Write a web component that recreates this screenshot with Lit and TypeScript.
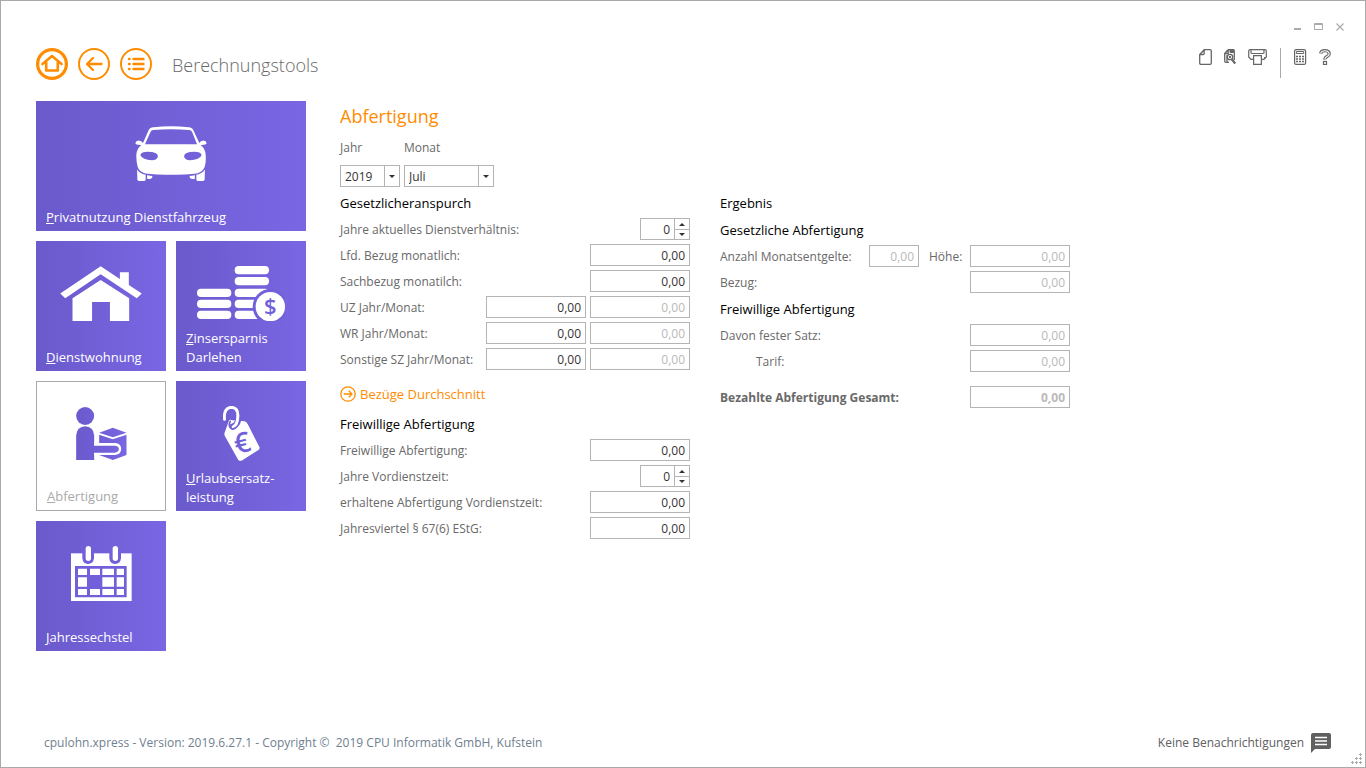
import { LitElement, html, svg, css, nothing } from "lit";
import { customElement, state } from "lit/decorators.js";
import { classMap } from "lit/directives/class-map.js";

const carIcon = html`<svg width="72" height="55" viewBox="315 92 217 166" fill="currentColor" aria-hidden="true">
  <path fill-rule="evenodd" d="M339 143 L356 105 Q359 97 370 96 Q424 89 477 96 Q488 97 491 105 L509 143 Q512 137 522 136 Q531 138 531 144 Q529 150 513 149 Q527 160 528 178 Q530 200 525 216 Q519 230 506 234 Q488 239 424 239 Q360 239 342 234 Q328 230 323 216 Q318 200 319 178 Q320 160 334 149 Q318 150 316 144 Q316 138 325 136 Q335 137 339 143 Z M345 147 H502 L487 109 Q485 105 478 104 Q424 99 370 104 Q364 105 362 109 Z M331 180 Q334 170 353 170 Q384 170 384 184 Q382 195 366 195 Q338 193 331 180 Z M516 180 Q513 170 494 170 Q463 170 463 184 Q465 195 481 195 Q509 193 516 180 Z"/>
  <path d="M321 223 Q328 235 347 239 L347 254 Q346 258 342 258 H328 Q323 258 322 254 Z M526 223 Q519 235 500 239 L500 254 Q501 258 505 258 H519 Q524 258 525 254 Z M351 241 L367 243 V248 L361 252 H352 Z M496 241 L480 243 V248 L486 252 H495 Z"/>
</svg>`;

const houseIcon = html`<svg width="82" height="55" viewBox="90 92 246 166" fill="currentColor" aria-hidden="true">
  <path d="M90 175 L212 93 L270 131 V111 H297 V149 L336 175 L321 189 L212 117 L105 189 Z"/>
  <path d="M127 189 L212 134 L298 189 V258 H240 V201 H186 V258 H127 Z"/>
</svg>`;

const coin = (x: number, y: number) => svg`<rect x=${x} y=${y} width="103" height="25" rx="12"/>`;
const coinsIcon = html`<svg width="88" height="55" viewBox="504 93 264 165" fill="currentColor" aria-hidden="true">
  ${[161, 194, 227].map((y) => coin(504, y))}
  ${[93, 126, 161, 194, 227].map((y) => coin(617, y))}
  <circle cx="724" cy="215" r="53" fill="#7260da"/>
  <circle cx="724" cy="215" r="44"/>
  <text x="724" y="238" text-anchor="middle" font-family="Open Sans" font-weight="600" font-size="66" fill="#7260da">$</text>
</svg>`;

const personIcon = html`<svg width="51" height="55" viewBox="138 93 152 165" aria-hidden="true">
  <defs><linearGradient id="pg" gradientUnits="userSpaceOnUse" x1="138" x2="290" y1="0" y2="0">
    <stop offset="0" stop-color="#6a5acd"/><stop offset="1" stop-color="#7966e2"/></linearGradient></defs>
  <g fill="url(#pg)">
    <circle cx="165" cy="123" r="27"/>
    <path d="M138 255 V181 Q140 155 165 154 Q190 155 192 181 V255 Z"/>
    <path d="M207 173 L248 158 L289 173 L248 187 Z"/>
    <path d="M207 179 L248 193 L289 179 V240 L248 255 L207 240 Z"/>
  </g>
  <path d="M192 204 H255 Q273 206 273 222 Q273 238 255 240 H192 Z" fill="#fff"/>
  <path d="M190 212 H253 Q266 213 266 222 Q266 232 253 233 H190 Z" fill="url(#pg)"/>
</svg>`;

const tagIcon = html`<svg width="37" height="55" viewBox="579 93 110 165" fill="currentColor" aria-hidden="true">
  <path d="M597 135 Q602 133 606 136 L644 139 Q650 142 653 148 L688 217 Q689 222 685 225 L634 257 Q628 259 624 254 L584 183 Q582 179 583 174 Z"/>
  <g fill="none" stroke-linecap="round">
    <path d="M607 155 Q628 148 624 120" stroke="#7260da" stroke-width="18"/>
    <path d="M583 133 Q580 98 604 97 Q624 99 623 122 Q623 148 609 156" stroke="#fff" stroke-width="9"/>
    <path d="M600 139 Q592 157 607 162 Q613 162 617 158" stroke="#7260da" stroke-width="5"/>
  </g>
  <text x="636" y="233" transform="rotate(-14 636 205)" text-anchor="middle" font-family="Open Sans" font-weight="600" font-size="84" fill="#7260da">€</text>
</svg>`;

const calendarIcon = html`<svg width="61" height="55" viewBox="123 93 183 165" fill="currentColor" aria-hidden="true">
  <rect x="123" y="115" width="182" height="143"/>
  <path d="M135 153 H290 V247 H135 Z M157 108 H192 V130 Q190 147 174 147 Q159 147 157 130 Z M238 108 H273 V130 Q271 147 255 147 Q240 147 238 130 Z" fill="#7260da"/>
  <rect x="167" y="93" width="16" height="45" rx="8"/><rect x="248" y="93" width="16" height="45" rx="8"/>
  <path d="M144 161h27v19h-27z M180 161h30v19h-30z M217 161h35v19h-35z M260 161h22v19h-22z M144 187h27v28h-27z M217 187h35v28h-35z M260 187h22v28h-22z M144 222h27v18h-27z M180 222h30v18h-30z M217 222h35v18h-35z M260 222h22v18h-22z"/>
</svg>`;

interface Tile { key: string; rest: string; second?: string; icon: unknown; wide?: boolean; }

const tiles: Tile[] = [
  { key: "P", rest: "rivatnutzung Dienstfahrzeug", icon: carIcon, wide: true },
  { key: "D", rest: "ienstwohnung", icon: houseIcon },
  { key: "Z", rest: "insersparnis", second: "Darlehen", icon: coinsIcon },
  { key: "A", rest: "bfertigung", icon: personIcon },
  { key: "U", rest: "rlaubsersatz-", second: "leistung", icon: tagIcon },
  { key: "J", rest: "ahressechstel", icon: calendarIcon },
];

@customElement("app-root")
class AppRoot extends LitElement {
  static styles = css`
    * { box-sizing: border-box; }
    button { font: inherit; color: inherit; background: none; border: 0; padding: 0; margin: 0; cursor: pointer; }
    svg { display: block; flex: none; }
    :host {
      display: flex; flex-direction: column; box-sizing: border-box; min-height: 100vh;
      border: 1px solid #aaa; background: #fff; color: #696969;
      font: 12px/18px "Segoe UI", "Open Sans", "Noto Sans", sans-serif;
    }
    .titlebar { display: flex; justify-content: flex-end; gap: 12px; padding: 21px 21px 0 0; color: #aaa; }
    header { display: flex; align-items: flex-start; gap: 10px; padding: 16px 34px 0 35px; }
    nav { display: flex; gap: 10px; color: #ff8c00; }
    .title { flex: 1; margin: 0 0 0 10px; font-size: 18px; line-height: 34px; font-weight: 300; color: #696969; }
    .tools { display: flex; gap: 12px; }
    .tools button { height: 18px; display: flex; align-items: center; }
    .rule { width: 1px; height: 30px; margin: 0 1px; background: #aaa; }
    main { flex: 1; display: grid; grid-template-columns: 270px minmax(0, 1fr); gap: 34px; align-items: start; padding: 19px 35px; }
    .tiles { display: grid; grid-template-columns: 1fr 1fr; gap: 10px; }
    .tile {
      display: flex; flex-direction: column; align-items: center; justify-content: space-between; height: 130px;
      padding: 25px 10px 4px; color: #fff; background: linear-gradient(90deg, #6a5acb, #7966e3);
      font-size: 13px; line-height: 19px; text-align: left;
    }
    .tile.wide { grid-column: span 2; }
    .tile.selected { background: #fff; border: 1px solid #aaa; color: #aaa; padding: 24px 10px 4px; }
    .caption { align-self: stretch; white-space: nowrap; }
    h2, h3 { margin: 0; font-weight: 400; }
    h2 { font-size: 18px; line-height: 30px; color: #ff8c00; }
    h3 { font-size: 13px; line-height: 20px; color: #000; margin-bottom: 5px; }
    .period { display: grid; grid-template-columns: 60px 90px; gap: 8px 4px; margin: 8px 0 6px; }
    .drop { display: grid; grid-template-columns: 1fr 15px; height: 22px; border: 1px solid #b4b4b4; }
    .drop select { grid-area: 1 / 1 / 2 / 3; appearance: none; border: 0; outline: 0; background: none; padding: 2px 4px 0; font: inherit; color: #333; }
    .arrow { grid-area: 1 / 2; display: grid; place-items: center; border-left: 1px solid #b4b4b4; pointer-events: none; }
    .columns { display: grid; grid-template-columns: repeat(2, minmax(0, 350px)); gap: 30px; }
    .rows { display: grid; gap: 4px; }
    .row { display: flex; align-items: center; gap: 4px; }
    .row label { flex: 1; padding-top: 2px; white-space: nowrap; }
    .row .middle { flex: none; width: 37px; margin-left: 6px; }
    .row .indent { padding-left: 36px; }
    .row input { width: 100px; height: 22px; border: 1px solid #b4b4b4; outline: 0; padding: 0 4px; background: #fff; font: inherit; color: #333; text-align: right; }
    .row input:disabled { color: #b9b9b9; }
    .row input.small { width: 50px; }
    .spinner { display: grid; grid-template-columns: minmax(0, 1fr) 15px; width: 50px; height: 22px; border: 1px solid #b4b4b4; }
    .row .spinner input { width: 100%; height: 20px; border: 0; }
    .steps { display: grid; grid-template-rows: 1fr 1fr; border-left: 1px solid #b4b4b4; }
    .steps button { display: grid; place-items: center; min-height: 0; }
    .steps button + button { border-top: 1px solid #b4b4b4; }
    .total { margin-top: 14px; font-weight: 700; }
    .link { display: flex; align-items: center; gap: 4px; margin: 14px 0 10px; color: #ff8c00; font-size: 13px; line-height: 20px; }
    .result { margin-bottom: 7px; }
    .later { margin-top: 6px; }
    footer { display: flex; justify-content: space-between; align-items: center; padding: 0 34px 14px 43px; color: #708090; }
    .copyright { white-space: pre; }
    .notice { display: flex; align-items: center; gap: 7px; color: #606060; }
    .grip { position: absolute; right: 4px; bottom: 4px; }
  `;

  @state() private active = "A";
  @state() private years: Record<string, number> = { service: 0, previous: 0 };

  private field(id: string, label: string, opts: { disabled?: boolean; monthly?: boolean; indent?: boolean; bold?: boolean } = {}) {
    return html`<div class=${classMap({ row: true, total: !!opts.bold })}>
      <label for=${id} class=${opts.indent ? "indent" : ""}>${label}</label>
      <input id=${id} type="text" value="0,00" ?disabled=${!!opts.disabled}>
      ${opts.monthly ? html`<input type="text" value="0,00" disabled aria-label="${label} Monat">` : nothing}
    </div>`;
  }

  private step(id: string, by: number) {
    this.years = { ...this.years, [id]: Math.max(0, this.years[id] + by) };
  }

  private spinner(id: string, label: string) {
    return html`<div class="row">
      <label for=${id}>${label}</label>
      <div class="spinner">
        <input id=${id} type="text" inputmode="numeric" .value=${String(this.years[id])}>
        <div class="steps">
          <button aria-label="Erhöhen" @click=${() => this.step(id, 1)}><svg width="6" height="3" viewBox="0 0 6 3"><path d="M0 3 L3 0 L6 3Z" fill="#333"/></svg></button>
          <button aria-label="Verringern" @click=${() => this.step(id, -1)}><svg width="6" height="3" viewBox="0 0 6 3"><path d="M0 0 L3 3 L6 0Z" fill="#333"/></svg></button>
        </div>
      </div>
    </div>`;
  }

  private drop(id: string, options: string[]) {
    return html`<div class="drop"><select id=${id}>${options.map((o) => html`<option>${o}</option>`)}</select>
      <span class="arrow"><svg width="6" height="3" viewBox="0 0 6 3"><path d="M0 0 L3 3 L6 0Z" fill="#333"/></svg></span></div>`;
  }

  render() {
    return html`
      <div class="titlebar">
        <button aria-label="Minimieren"><svg width="8" height="10"><path d="M0 6h7v2H0z" fill="currentColor"/></svg></button>
        <button aria-label="Maximieren"><svg width="10" height="10" fill="none" stroke="currentColor"><path d="M.5 1.5h8v6h-8zM0 2.5h9"/></svg></button>
        <button aria-label="Schließen"><svg width="8" height="10" fill="none" stroke="currentColor"><path d="M.5 1.5l7 7m0-7l-7 7" stroke-width="1.2"/></svg></button>
      </div>
      <header>
        <nav>
          <button aria-label="Startseite"><svg width="32" height="32" fill="none" stroke="currentColor">
            <circle cx="16" cy="16" r="14.4" stroke-width="3.2"/><path d="M6.5 16L16 8l9.500 8M10.200 14.500v8h11.600v-8" stroke-width="2.600" stroke-linecap="round" stroke-linejoin="round"/></svg></button>
          <button aria-label="Zurück"><svg width="32" height="32" fill="none" stroke="currentColor">
            <circle cx="16" cy="16" r="15" stroke-width="2"/><path d="M23.500 16H9.500M15 10l-6 6 6 6" stroke-width="2.300" stroke-linecap="round" stroke-linejoin="round"/></svg></button>
          <button aria-label="Liste"><svg width="32" height="32" fill="none" stroke="currentColor">
            <circle cx="16" cy="16" r="15" stroke-width="2"/><path d="M9 11h.6M9 16h.6M9 21h.6M13.500 11h10M13.500 16h10M13.500 21h10" stroke-width="2.400" stroke-linecap="round"/></svg></button>
        </nav>
        <h1 class="title">Berechnungstools</h1>
        <div class="tools">
          <button aria-label="Neu"><svg width="13" height="16" fill="none" stroke="#666" stroke-width="1.300"><path d="M5.200.7h5.800q1.300 0 1.300 1.300v12q0 1.300-1.300 1.300H2q-1.300 0-1.300-1.300V5.500zM5.200 1v3.500q0 1-1 1H1"/></svg></button>
          <button aria-label="Vorschau"><svg width="12" height="16" fill="none" stroke="#666"><path d="M4 .7h5q1.300 0 1.300 1.300v9M4 .7L.7 4.500V12q0 1.300 1.300 1.300h3M4.200 1v3.500H1M3 13V6" stroke-width="1.300"/><path d="M6 .5h3.500v3H6z" fill="#666"/><circle cx="6" cy="8" r="2.700" stroke-width="1.300"/><path d="M5 7l2 2M7 7L5 9"/><path d="M8 10.500l3.200 4" stroke-width="2.200"/></svg></button>
          <button aria-label="Drucken"><svg width="19" height="16" fill="none" stroke="#666" stroke-width="1.200"><path d="M5 10.400H3L.7 8V2Q.7.600 2.200.600h14.600q1.500 0 1.500 1.400v6L16 10.400h-2M3 1v2.500q0 1 1 1h11q1 0 1-1V1"/><path d="M5.600 6.600h7.800v8.800H5.600z" fill="#fff"/><path d="M16 8.500h1"/></svg></button>
          <span class="rule"></span>
          <button aria-label="Rechner"><svg width="13" height="16" fill="none" stroke="#666"><rect x=".6" y=".6" width="11" height="14.800" rx="1.500" stroke-width="1.200"/><path d="M2.500 2.500h7.200v2H2.500z"/><path d="M2 7.500h8.500M2 10h8.500M2 12.500h8.500" stroke-width="1.600" stroke-dasharray="2 1"/></svg></button>
          <button aria-label="Hilfe"><svg width="12" height="16" fill="none"><path d="M1.700 4.500Q2 1.700 6 1.700t4.200 3Q10.200 6.500 8 7.600T6 10.500" stroke="#666" stroke-width="3.300"/><path d="M1.700 4Q2.500 1.700 6 1.700t4.200 3Q10.200 6.500 8 7.600T6 10" stroke="#fff" stroke-width="1.100"/><rect x="4.500" y="12.500" width="3" height="3" stroke="#666" stroke-width="1.200"/></svg></button>
        </div>
      </header>
      <main>
        <div class="tiles">
          ${tiles.map((t) => html`<button class=${classMap({ tile: true, wide: !!t.wide, selected: t.key === this.active })} @click=${() => (this.active = t.key)}>
            ${t.icon}<span class="caption"><u>${t.key}</u>${t.rest}${t.second ? html`<br>${t.second}` : nothing}</span>
          </button>`)}
        </div>
        <section>
          <h2>Abfertigung</h2>
          <div class="period">
            <label for="year">Jahr</label><label for="month">Monat</label>
            ${this.drop("year", ["2019", "2018"])}${this.drop("month", ["Juli", "August"])}
          </div>
          <div class="columns">
            <div>
              <h3>Gesetzlicheranspurch</h3>
              <div class="rows">
                ${this.spinner("service", "Jahre aktuelles Dienstverhältnis:")}
                ${this.field("current", "Lfd. Bezug monatlich:")}
                ${this.field("kind", "Sachbezug monatilch:")}
                ${this.field("uz", "UZ Jahr/Monat:", { monthly: true })}
                ${this.field("wr", "WR Jahr/Monat:", { monthly: true })}
                ${this.field("sz", "Sonstige SZ Jahr/Monat:", { monthly: true })}
              </div>
              <button class="link"><svg width="16" height="16" fill="none" stroke="currentColor" stroke-width="1.300"><circle cx="8" cy="8" r="7.200"/><path d="M3.800 8h8M8.800 4.800L12 8l-3.200 3.200"/></svg>Bezüge Durchschnitt</button>
              <h3>Freiwillige Abfertigung</h3>
              <div class="rows">
                ${this.field("voluntary", "Freiwillige Abfertigung:")}
                ${this.spinner("previous", "Jahre Vordienstzeit:")}
                ${this.field("received", "erhaltene Abfertigung Vordienstzeit:")}
                ${this.field("quarter", "Jahresviertel § 67(6) EStG:")}
              </div>
            </div>
            <div>
              <h3 class="result">Ergebnis</h3>
              <h3>Gesetzliche Abfertigung</h3>
              <div class="rows">
                <div class="row">
                  <label for="count">Anzahl Monatsentgelte:</label><input id="count" class="small" type="text" value="0,00" disabled>
                  <label for="amount" class="middle">Höhe:</label><input id="amount" type="text" value="0,00" disabled>
                </div>
                ${this.field("pay", "Bezug:", { disabled: true })}
              </div>
              <h3 class="later">Freiwillige Abfertigung</h3>
              <div class="rows">
                ${this.field("fixed", "Davon fester Satz:", { disabled: true })}
                ${this.field("tariff", "Tarif:", { disabled: true, indent: true })}
              </div>
              ${this.field("total", "Bezahlte Abfertigung Gesamt:", { disabled: true, bold: true })}
            </div>
          </div>
        </section>
      </main>
      <footer>
        <span class="copyright">cpulohn.xpress - Version: 2019.6.27.1 - Copyright ©  2019 CPU Informatik GmbH, Kufstein</span>
        <button class="notice">Keine Benachrichtigungen
          <svg width="20" height="20"><path d="M2 0h16q2 0 2 2v12q0 2-2 2H4l-4 4V2q0-2 2-2z" fill="#606060"/><path d="M4 4.500h12M4 8h12M4 11.500h12" stroke="#fff" stroke-width="1.400"/></svg></button>
      </footer>
      <svg class="grip" width="11" height="11" fill="#aaa" aria-hidden="true"><path d="M8 1h3v1H8zM9 0h1v3H9zM4 5h3v1H4zM5 4h1v3H5zM8 5h3v1H8zM9 4h1v3H9zM0 9h3v1H0zM1 8h1v3H1zM4 9h3v1H4zM5 8h1v3H5zM8 9h3v1H8zM9 8h1v3H9z"/></svg>
    `;
  }
}
